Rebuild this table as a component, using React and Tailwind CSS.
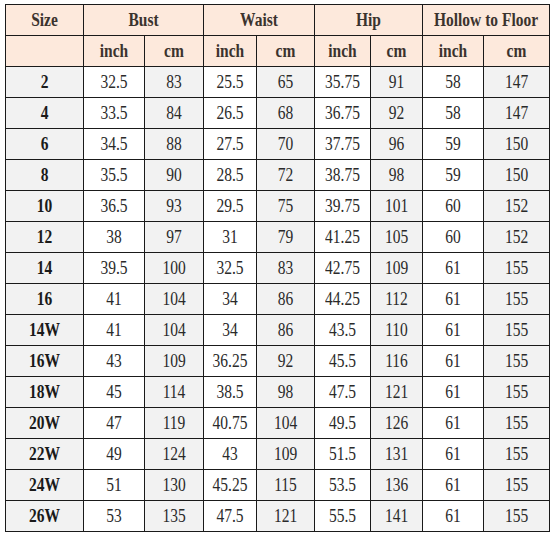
import React from "react";

const rows = [
  ["2", "32.5", "83", "25.5", "65", "35.75", "91", "58", "147"],
  ["4", "33.5", "84", "26.5", "68", "36.75", "92", "58", "147"],
  ["6", "34.5", "88", "27.5", "70", "37.75", "96", "59", "150"],
  ["8", "35.5", "90", "28.5", "72", "38.75", "98", "59", "150"],
  ["10", "36.5", "93", "29.5", "75", "39.75", "101", "60", "152"],
  ["12", "38", "97", "31", "79", "41.25", "105", "60", "152"],
  ["14", "39.5", "100", "32.5", "83", "42.75", "109", "61", "155"],
  ["16", "41", "104", "34", "86", "44.25", "112", "61", "155"],
  ["14W", "41", "104", "34", "86", "43.5", "110", "61", "155"],
  ["16W", "43", "109", "36.25", "92", "45.5", "116", "61", "155"],
  ["18W", "45", "114", "38.5", "98", "47.5", "121", "61", "155"],
  ["20W", "47", "119", "40.75", "104", "49.5", "126", "61", "155"],
  ["22W", "49", "124", "43", "109", "51.5", "131", "61", "155"],
  ["24W", "51", "130", "45.25", "115", "53.5", "136", "61", "155"],
  ["26W", "53", "135", "47.5", "121", "55.5", "141", "61", "155"],
];

const groups = ["Bust", "Waist", "Hip", "Hollow to Floor"];

// stretched text, like the original picture
function T({ children }) {
  return <span className="inline-block scale-y-[1.15]">{children}</span>;
}

export default function App() {
  return (
    <div className="w-[556px] h-[536px] bg-white pl-[5px] pt-[4px]" style={{ fontFamily: '"Liberation Serif", "Times New Roman", serif' }}>
      <div className="grid w-[545px] grid-cols-[77px_60px_58px_52px_57px_55px_51px_60px_65px] auto-rows-[30px] gap-px bg-[#1a1a1a] p-px text-[15.5px] leading-none">
        <div className="bg-[#fde9dc] flex items-center justify-center font-bold text-[#3b332e]"><T>Size</T></div>
        {groups.map((g) => (
          <div key={g} className="col-span-2 bg-[#fde9dc] flex items-center justify-center font-bold text-[#3b332e]"><T>{g}</T></div>
        ))}

        <div className="bg-[#fde9dc]" />
        {groups.map((g) => (
          <React.Fragment key={g}>
            <div className="bg-[#fde9dc] flex items-center justify-center font-bold text-[#3b332e]"><T>inch</T></div>
            <div className="bg-[#fde9dc] flex items-center justify-center font-bold text-[#3b332e]"><T>cm</T></div>
          </React.Fragment>
        ))}

        {rows.map((r) =>
          r.map((v, i) => (
            <div
              key={r[0] + i}
              className={`flex items-center justify-center ${
                i === 0 ? "bg-[#f2f2f2] font-bold text-[#1a1a1a]" : i % 2 === 0 ? "bg-[#f2f2f2] text-[#2a2a2a]" : "bg-white text-[#2a2a2a]"
              }`}
            >
              <T>{v}</T>
            </div>
          ))
        )}
      </div>
    </div>
  );
}
